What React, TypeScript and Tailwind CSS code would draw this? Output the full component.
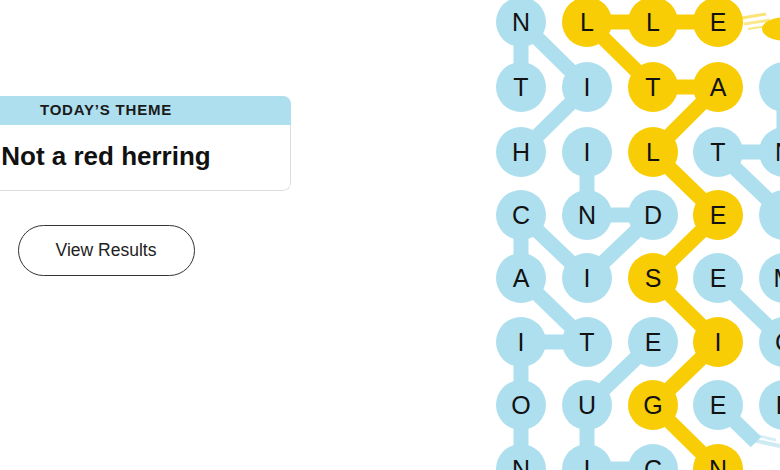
import React from "react";

const BLUE = "#aedfee";
const YELLOW = "#f8cd05";

const COLS = [521, 587, 653, 718, 784];
const ROWS = [22, 87, 152, 215, 278, 342, 405, 469];

const LETTERS: string[][] = [
  ["N", "L", "L", "E", ""],
  ["T", "I", "T", "A", "I"],
  ["H", "I", "L", "T", "N"],
  ["C", "N", "D", "E", "I"],
  ["A", "I", "S", "E", "M"],
  ["I", "T", "E", "I", "C"],
  ["O", "U", "G", "E", "E"],
  ["N", "I", "C", "N", ""],
];

const SPANGRAM: [number, number][] = [
  [0, 3], [0, 2], [0, 1], [1, 2], [1, 3], [2, 2], [3, 3], [4, 2], [5, 3], [6, 2], [7, 3],
];

const WORD_LINKS: [number, number, number, number][] = [
  // HINT
  [2, 0, 1, 1], [1, 1, 0, 0], [0, 0, 1, 0],
  // INDICATION
  [2, 1, 3, 1], [3, 1, 3, 2], [3, 2, 4, 1], [4, 1, 3, 0], [3, 0, 4, 0],
  [4, 0, 5, 1], [5, 1, 5, 0], [5, 0, 6, 0], [6, 0, 7, 0],
  // lower word
  [5, 2, 6, 1], [6, 1, 7, 1], [7, 1, 7, 2],
  // right side
  [2, 3, 2, 4], [2, 3, 3, 4], [1, 4, 2, 4], [4, 3, 5, 4],
];

const isYellow = (r: number, c: number) => SPANGRAM.some(([a, b]) => a === r && b === c);

function Board() {
  const links = SPANGRAM.slice(1).map((p, i) => [SPANGRAM[i][0], SPANGRAM[i][1], p[0], p[1]]);
  return (
    <svg width={290} height={470} viewBox="490 0 290 470" className="block">
      <g stroke={BLUE} strokeWidth={15}>
        {WORD_LINKS.map(([r1, c1, r2, c2], i) => (
          <line key={i} x1={COLS[c1]} y1={ROWS[r1]} x2={COLS[c2]} y2={ROWS[r2]} />
        ))}
        {/* frayed edge of the link heading off the board */}
        <line x1={718} y1={405} x2={756} y2={442} />
        <line x1={752} y1={440} x2={780} y2={446} strokeWidth={4} opacity={0.6} />
        <line x1={750} y1={434} x2={776} y2={440} strokeWidth={3} opacity={0.5} />
      </g>
      <g stroke={YELLOW} strokeWidth={15}>
        {links.map(([r1, c1, r2, c2], i) => (
          <line key={i} x1={COLS[c1]} y1={ROWS[r1]} x2={COLS[c2]} y2={ROWS[r2]} />
        ))}
        <line x1={718} y1={22} x2={742} y2={22} />
        <line x1={742} y1={18} x2={766} y2={14} strokeWidth={3} opacity={0.55} />
        <line x1={744} y1={24} x2={770} y2={20} strokeWidth={3} opacity={0.45} />
        <line x1={748} y1={29} x2={768} y2={26} strokeWidth={2} opacity={0.5} />
      </g>
      <ellipse cx={786} cy={29} rx={24} ry={12} fill={YELLOW} />
      {LETTERS.map((row, r) =>
        row.map((ch, c) =>
          ch ? (
            <circle key={`c${r}-${c}`} cx={COLS[c]} cy={ROWS[r]} r={25} fill={isYellow(r, c) ? YELLOW : BLUE} />
          ) : null
        )
      )}
      <g fontFamily="'Liberation Sans', Arial, sans-serif" fontSize={25} fill="#121212" textAnchor="middle">
        {LETTERS.map((row, r) =>
          row.map((ch, c) =>
            ch ? (
              <text key={`t${r}-${c}`} x={COLS[c]} y={ROWS[r] + 9}>
                {ch}
              </text>
            ) : null
          )
        )}
      </g>
    </svg>
  );
}

export default function App() {
  return (
    <div
      className="w-[780px] h-[470px] overflow-hidden bg-white flex"
      style={{ fontFamily: "'Liberation Sans', Arial, sans-serif" }}
    >
      <div className="w-[370px] ml-[-79px] shrink-0 flex flex-col items-center pt-[96px]">
        <div className="w-full rounded-[8px] overflow-hidden bg-white">
          <div className="h-[29px] bg-[#aedfee] flex items-center justify-center text-[15px] font-bold tracking-[0.8px] text-[#1a1a1a]">
            TODAY’S THEME
          </div>
          <div className="h-[66px] border-x border-b border-[#dcdcdc] rounded-b-[8px] flex justify-center pt-[18px]">
            <span className="text-[26px] leading-[26px] font-bold text-[#111]">Not a red herring</span>
          </div>
        </div>
        <button className="mt-[34px] w-[177px] h-[51px] rounded-full border-[1.5px] border-[#333] bg-white text-[17.5px] text-[#222] flex items-center justify-center">
          View Results
        </button>
      </div>
      <div className="ml-auto w-[290px] h-[470px] shrink-0">
        <Board />
      </div>
    </div>
  );
}
